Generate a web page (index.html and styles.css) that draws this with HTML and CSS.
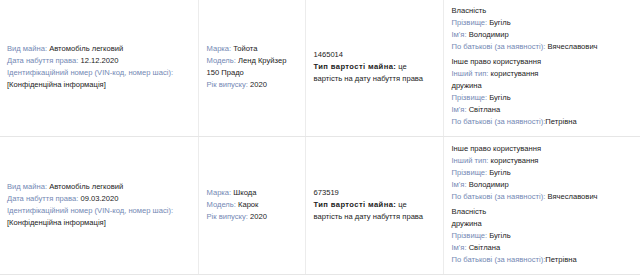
FILE: index.html
```html
<!DOCTYPE html>
<html lang="uk">
<head>
<meta charset="utf-8">
<link rel="stylesheet" href="styles.css">
</head>
<body>
<table class="decl">
  <colgroup>
    <col class="c1"><col class="c2"><col class="c3"><col class="c4">
  </colgroup>
  <tr>
    <td>
      <div><span class="lbl">Вид майна:</span> Автомобіль легковий</div>
      <div><span class="lbl">Дата набуття права:</span> 12.12.2020</div>
      <div><span class="lbl">Ідентифікаційний номер (VIN-код, номер шасі):</span></div>
      <div>[Конфіденційна інформація]</div>
    </td>
    <td>
      <div><span class="lbl">Марка:</span> Тойота</div>
      <div><span class="lbl">Модель:</span> Ленд Круйзер 150 Прадо</div>
      <div><span class="lbl">Рік випуску:</span> 2020</div>
    </td>
    <td class="cost">
      <div>1465014</div>
      <div><b>Тип вартості майна:</b> це вартість на дату набуття права</div>
    </td>
    <td class="owners">
      <div class="grp">
        <div>Власність</div>
        <div><span class="lbl">Прізвище:</span> Бугіль</div>
        <div><span class="lbl">Ім'я:</span> Володимир</div>
        <div><span class="lbl">По батькові (за наявності):</span> Вячеславович</div>
      </div>
      <div class="grp">
        <div>Інше право користування</div>
        <div><span class="lbl">Інший тип:</span> користування</div>
        <div>дружина</div>
        <div><span class="lbl">Прізвище:</span> Бугіль</div>
        <div><span class="lbl">Ім'я:</span> Світлана</div>
        <div><span class="lbl">По батькові (за наявності):</span>Петрівна</div>
      </div>
    </td>
  </tr>
  <tr>
    <td>
      <div><span class="lbl">Вид майна:</span> Автомобіль легковий</div>
      <div><span class="lbl">Дата набуття права:</span> 09.03.2020</div>
      <div><span class="lbl">Ідентифікаційний номер (VIN-код, номер шасі):</span></div>
      <div>[Конфіденційна інформація]</div>
    </td>
    <td>
      <div><span class="lbl">Марка:</span> Шкода</div>
      <div><span class="lbl">Модель:</span> Карок</div>
      <div><span class="lbl">Рік випуску:</span> 2020</div>
    </td>
    <td class="cost">
      <div>673519</div>
      <div><b>Тип вартості майна:</b> це вартість на дату набуття права</div>
    </td>
    <td class="owners">
      <div class="grp">
        <div>Інше право користування</div>
        <div><span class="lbl">Інший тип:</span> користування</div>
        <div><span class="lbl">Прізвище:</span> Бугіль</div>
        <div><span class="lbl">Ім'я:</span> Володимир</div>
        <div><span class="lbl">По батькові (за наявності):</span> Вячеславович</div>
      </div>
      <div class="grp">
        <div>Власність</div>
        <div>дружина</div>
        <div><span class="lbl">Прізвище:</span> Бугіль</div>
        <div><span class="lbl">Ім'я:</span> Світлана</div>
        <div><span class="lbl">По батькові (за наявності):</span>Петрівна</div>
      </div>
    </td>
  </tr>
</table>
</body>
</html>
```

FILE: styles.css
```css
html, body {
  margin: 0;
  padding: 0;
  background: #fff;
}
body {
  font-family: "Liberation Sans", Arial, sans-serif;
  font-size: 7.6px;
  line-height: 12px;
  color: #222;
}
.decl {
  border-collapse: collapse;
  table-layout: fixed;
  width: 640px;
  margin-top: -1px;
}
.c1 { width: 198px; }
.c2 { width: 107px; }
.c3 { width: 138px; }
.c4 { width: 197px; }
.decl td {
  vertical-align: middle;
  padding: 6px 8px 8px 7px;
  border-right: 1px solid #ececec;
  border-bottom: 1px solid #e6e6e6;
}
.decl td:last-child {
  border-right: none;
}
.decl td + td {
  padding-left: 8px;
}
.decl td.cost {
  padding-right: 18px;
}
.lbl {
  color: #7388b4;
}
b {
  font-weight: bold;
  color: #222;
  letter-spacing: 0.4px;
}
.grp + .grp {
  margin-top: 3px;
}
```
